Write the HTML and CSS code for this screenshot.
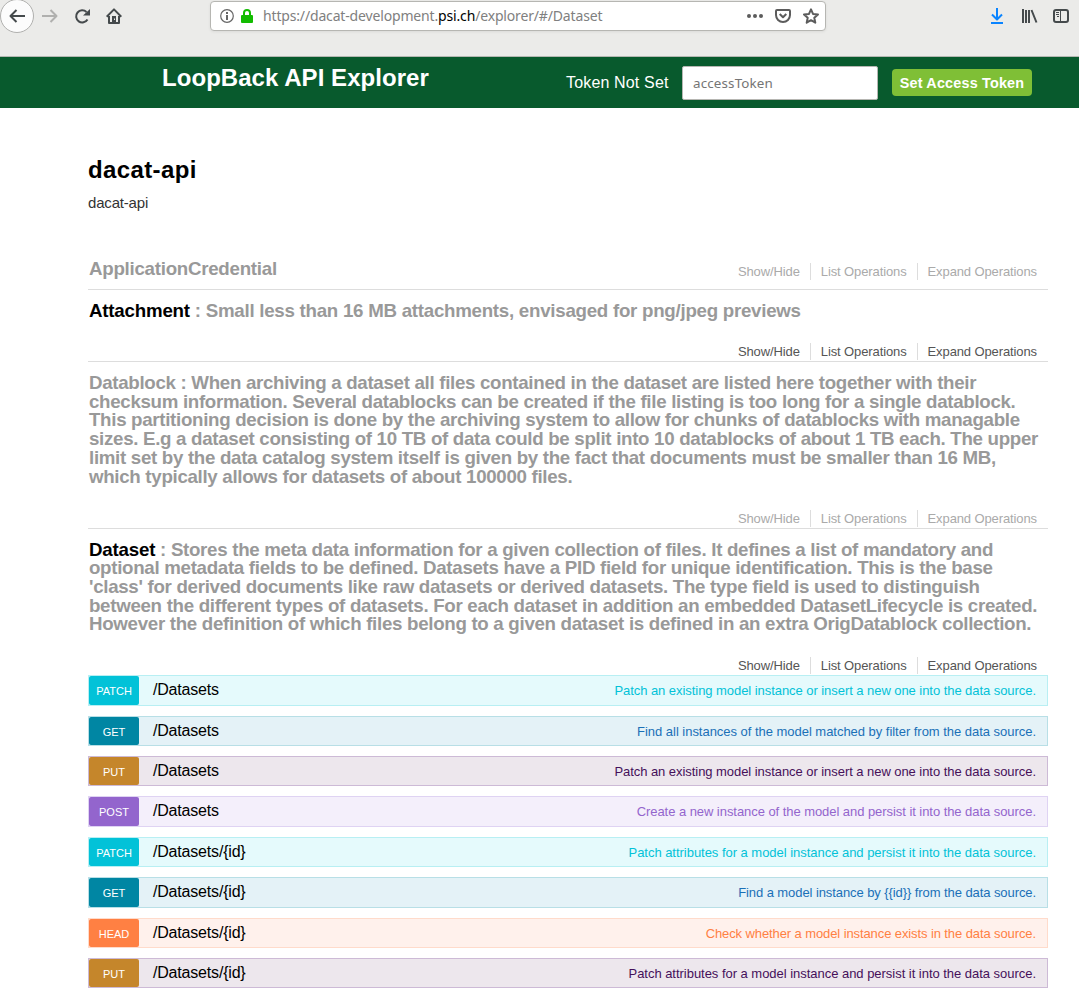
FILE: index.html
```html
<!DOCTYPE html>
<html lang="en">
<head>
<meta charset="utf-8">
<title>LoopBack API Explorer</title>
<link rel="stylesheet" href="styles.css">
</head>
<body>
<div class="toolbar">
  <div class="nav">
    <span class="back"><svg width="16" height="16" viewBox="0 0 16 16"><path d="M16 8H1.500M7.500 2 1.500 8l6 6" class="ln"/></svg></span>
    <svg class="forward" width="16" height="16" viewBox="0 0 16 16"><path d="M0 8h14.500M8.500 2l6 6-6 6" class="ln"/></svg>
    <svg class="reload" width="16" height="16" viewBox="0 0 16 16"><path d="M13.500 11.500A6.100 6.100 0 1 1 12.500 4" class="ln"/><path d="M16 1v6.500H9z" fill="currentColor"/></svg>
    <svg class="home" width="16" height="16" viewBox="0 0 16 16"><path d="M.7 8.700 8 1.400l7.300 7.300M3 8v7h10V8" class="ln"/><path fill-rule="evenodd" d="M6 8h4v7H6zM8 10.500v1.500h1v-1.500z" fill="currentColor"/></svg>
  </div>
  <div class="urlbar">
    <svg width="14" height="14" viewBox="0 0 14 14"><circle cx="7" cy="7" r="6.300" fill="none" stroke="#666" stroke-width="1.200"/><path d="M6 3h2v2H6zM6 6h2v5H6z" fill="#666"/></svg>
    <svg class="lock" width="12" height="14" viewBox="0 0 12 14"><path d="M3 7V4a3 3 0 0 1 6 0v3" fill="none" stroke="#12bc00" stroke-width="2"/><rect y="6" width="12" height="8" rx="1" fill="#12bc00"/></svg>
    <span class="url">https://dacat-development.<b>psi.ch</b>/explorer/#/Dataset</span>
    <span class="actions">
      <svg width="16" height="16" viewBox="0 0 16 16"><g fill="#5c5c5c"><circle cx="2" cy="8" r="2"/><circle cx="8" cy="8" r="2"/><circle cx="14" cy="8" r="2"/></g></svg>
      <svg width="16" height="16" viewBox="0 0 16 16"><path d="M2 2h12q1 0 1 1v4a7 7 0 0 1-14 0V3q0-1 1-1z" class="ln"/><path d="m4.700 6 3.300 3.300L11.300 6" class="ln"/></svg>
      <svg width="16" height="16" viewBox="0 0 16 16"><path d="m8 1.400 2 4.500 5 .6-3.700 3.300 1 4.900L8 12.200l-4.300 2.500 1-4.900L1 6.500l5-.6z" class="ln"/></svg>
    </span>
  </div>
  <div class="tools">
    <svg class="download" width="14" height="16" viewBox="0 0 14 16"><path d="M7 0v11M2 6.500l5 5 5-5M1 15h12" class="ln"/></svg>
    <svg width="16" height="16" viewBox="0 0 16 16"><path d="M1 1v14M4 2v13M7 2v13M9.500 2l5 12.500" class="ln"/></svg>
    <svg class="sidebar" width="16" height="16" viewBox="0 0 16 16"><rect x="1" y="2" width="14" height="12" rx="2" class="ln"/><path d="M7.500 2v12" stroke="currentColor"/><path d="M3 4.500h3M3 6.500h3M4 8.500h2" stroke="currentColor"/></svg>
  </div>
</div>
<header class="header">
  <h1 class="brand"><span>LoopBack API Explorer</span></h1>
  <span class="token">Token Not Set</span>
  <input class="field" type="text" placeholder="accessToken">
  <a class="submit">Set Access Token</a>
</header>
<main class="main">
  <h2 class="title">dacat-api</h2>
  <p class="desc">dacat-api</p>
  <section class="resource first">
    <h3>ApplicationCredential</h3>
    <ul class="options"><li>Show/Hide</li><li>List Operations</li><li>Expand Operations</li></ul>
  </section>
  <section class="resource active short">
    <h3><b>Attachment</b> : Small less than 16 MB attachments, envisaged for png/jpeg previews</h3>
    <ul class="options"><li>Show/Hide</li><li>List Operations</li><li>Expand Operations</li></ul>
  </section>
  <section class="resource">
    <h3>Datablock : When archiving a dataset all files contained in the dataset are listed here together with their<br>checksum information. Several datablocks can be created if the file listing is too long for a single datablock.<br>This partitioning decision is done by the archiving system to allow for chunks of datablocks with managable<br>sizes. E.g a dataset consisting of 10 TB of data could be split into 10 datablocks of about 1 TB each. The upper<br>limit set by the data catalog system itself is given by the fact that documents must be smaller than 16 MB,<br>which typically allows for datasets of about 100000 files.</h3>
    <ul class="options"><li>Show/Hide</li><li>List Operations</li><li>Expand Operations</li></ul>
  </section>
  <section class="resource active open">
    <h3><b>Dataset</b> : Stores the meta data information for a given collection of files. It defines a list of mandatory and<br>optional metadata fields to be defined. Datasets have a PID field for unique identification. This is the base<br>'class' for derived documents like raw datasets or derived datasets. The type field is used to distinguish<br>between the different types of datasets. For each dataset in addition an embedded DatasetLifecycle is created.<br>However the definition of which files belong to a given dataset is defined in an extra OrigDatablock collection.</h3>
    <ul class="options"><li>Show/Hide</li><li>List Operations</li><li>Expand Operations</li></ul>
  </section>
  <div class="operations">
    <div class="op patch"><span class="method">PATCH</span><span class="path">/Datasets</span><span class="note">Patch an existing model instance or insert a new one into the data source.</span></div>
    <div class="op get"><span class="method">GET</span><span class="path">/Datasets</span><span class="note wide">Find all instances of the model matched by filter from the data source.</span></div>
    <div class="op put"><span class="method">PUT</span><span class="path">/Datasets</span><span class="note">Patch an existing model instance or insert a new one into the data source.</span></div>
    <div class="op post"><span class="method">POST</span><span class="path">/Datasets</span><span class="note">Create a new instance of the model and persist it into the data source.</span></div>
    <div class="op patch"><span class="method">PATCH</span><span class="path">/Datasets/{id}</span><span class="note wide">Patch attributes for a model instance and persist it into the data source.</span></div>
    <div class="op get"><span class="method">GET</span><span class="path">/Datasets/{id}</span><span class="note tight">Find a model instance by {{id}} from the data source.</span></div>
    <div class="op head"><span class="method">HEAD</span><span class="path">/Datasets/{id}</span><span class="note tighter">Check whether a model instance exists in the data source.</span></div>
    <div class="op put"><span class="method">PUT</span><span class="path">/Datasets/{id}</span><span class="note wide">Patch attributes for a model instance and persist it into the data source.</span></div>
  </div>
</main>
</body>
</html>
```
FILE: styles.css
```css
* { box-sizing: border-box; }
body { margin: 0; height: 994px; overflow: hidden; background: #fff; font-family: "Liberation Sans", Arial, sans-serif; white-space: nowrap; }
h1, h2, h3, p, ul { margin: 0; padding: 0; }
svg { display: block; flex: none; }
.ln { fill: none; stroke: currentColor; stroke-width: 2; stroke-linejoin: round; }

.toolbar { display: flex; height: 57px; background: #ebebe9; border-bottom: 1px solid #b4b8b2; color: #454a4c; }
.nav { display: flex; align-items: center; width: 210px; height: 32px; }
.back { display: flex; align-items: center; justify-content: center; width: 34px; height: 34px; border: 1px solid #b0b0ae; border-radius: 50%; background: #fcfcfc; }
.forward { margin-left: 8px; color: #b0b0ae; }
.reload { margin-left: 16px; }
.home { margin-left: 16px; }
.urlbar { display: flex; align-items: center; width: 616px; height: 30px; margin-top: 1px; padding: 0 6px 0 9px; border: 1px solid #b6b6b2; border-radius: 4px; background: #fff; box-shadow: 0 1px 3px #0001; }
.lock { margin-left: 7px; }
.url { margin: 0 0 2px 10px; font: 14px "Noto Sans", sans-serif; letter-spacing: -.16px; color: #808080; }
.url b { font-weight: 400; color: #000; }
.actions { display: flex; gap: 12px; margin-left: auto; color: #5c5c5c; }
.tools { display: flex; align-items: center; gap: 17px; height: 32px; margin-left: 164px; }
.download { color: #0a84ff; margin-right: 1px; }
.sidebar { margin-left: -2px; }

.header { display: flex; height: 51px; padding-left: 162px; background: #085a2d; color: #fff; }
.brand { width: 404px; padding-top: 7px; font-size: 24px; line-height: 28px; letter-spacing: .05px; }
.token { width: 116px; padding-top: 16px; font-size: 16px; line-height: 20px; letter-spacing: .16px; }
.field { width: 196px; height: 34px; margin: 9px 14px 0 0; padding: 0 10px; border: 1px solid #b6b6b2; border-radius: 2px; background: #fff; font: 13.4px "Noto Sans", sans-serif; letter-spacing: .15px; }
.field::placeholder { color: #757575; opacity: 1; }
.submit { width: 140px; height: 27px; margin-top: 12px; border-radius: 4px; background: #7fbf36; font-size: 14.4px; font-weight: 700; line-height: 28px; text-align: center; letter-spacing: .18px; }

.main { width: 960px; margin-left: 88px; padding-top: 48px; }
.title { font-size: 24px; line-height: 28px; letter-spacing: .38px; }
.desc { padding-top: 10px; font-size: 15px; line-height: 18px; letter-spacing: -.18px; color: #333; }
.resource { display: flex; flex-direction: column; justify-content: space-between; height: 167px; padding: 12px 0 1px 1px; border-bottom: 1px solid #ddd; color: #999; }
.resource h3 { font-size: 18.72px; line-height: 18.72px; letter-spacing: -.305px; }
.resource b { color: #000; letter-spacing: -.2px; }
.resource.first { flex-direction: row; height: 38px; margin-top: 40px; padding: 8px 0 0; }
.first h3 { padding-left: 1px; }
.resource.first h3, .resource.short h3 { letter-spacing: -.26px; }
.first .options { margin-top: 3px; color: #aaa; }
.short { height: 72px; }
.resource.open { height: 146.3px; padding-top: 11.6px; border-bottom: 0; }
.resource.open h3 { letter-spacing: -.3px; }
.options { display: flex; align-self: flex-end; height: 17px; list-style: none; font-size: 13px; line-height: 18px; letter-spacing: -.11px; color: #aaa; }
.first .options { align-self: flex-start; }
.active .options { color: #555; }
.options li { padding: 0 10px; border-right: 1px solid #ddd; }
.options li:last-child { border: 0; padding-right: 11px; }

.operations { display: grid; gap: 10px; }
.op { display: flex; height: 30.38px; border: 1px solid; }
.method { width: 50px; border-radius: 2px; color: #fff; font-size: 11px; line-height: 30px; text-align: center; }
.path { padding-left: 14px; color: #000; font-size: 16px; line-height: 27px; letter-spacing: -.19px; }
.note { margin-left: auto; padding-right: 11px; font-size: 13px; line-height: 29px; letter-spacing: -.055px; }
.wide { letter-spacing: -.03px; }
.tight { letter-spacing: -.08px; }
.tighter { letter-spacing: -.1px; }
.patch { background: #e5fafc; border-color: #b8eff3; color: #02c2d8; }
.patch .method { background: #02c2d8; }
.get { background: #e4f2f7; border-color: #b8dfe6; color: #1a70b7; }
.get .method { background: #0086a3; }
.put { background: #ede7ed; border-color: #cdbad6; color: #45105a; }
.put .method { background: #c5862b; }
.post { background: #f4effb; border-color: #dfd3f3; color: #9365cd; }
.post .method { background: #9365cd; }
.head { background: #fff1ec; border-color: #ffdbcb; color: #ff8043; }
.head .method { background: #ff8043; }
```
